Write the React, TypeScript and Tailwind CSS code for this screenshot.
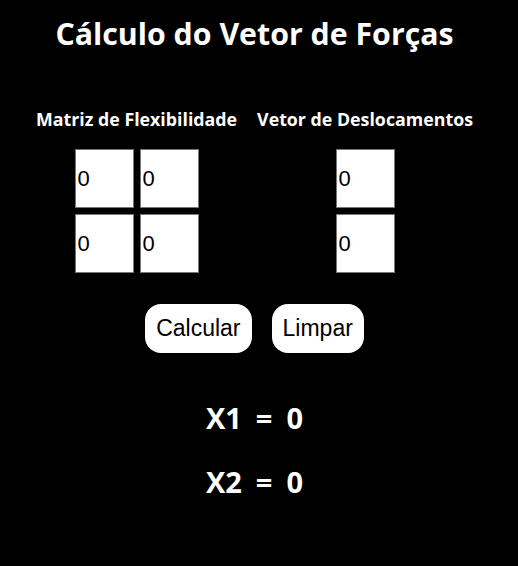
import { useState } from "react";

type Matriz = string[][];

export default function App() {
  const [matriz, setMatriz] = useState<Matriz>([
    ["0", "0"],
    ["0", "0"],
  ]);
  const [desloc, setDesloc] = useState<string[]>(["0", "0"]);
  const [forcas, setForcas] = useState<number[]>([0, 0]);

  // resolve F·X = D  ->  X = F^-1 · D
  const calcular = () => {
    const a = Number(matriz[0][0]) || 0;
    const b = Number(matriz[0][1]) || 0;
    const c = Number(matriz[1][0]) || 0;
    const d = Number(matriz[1][1]) || 0;
    const d1 = Number(desloc[0]) || 0;
    const d2 = Number(desloc[1]) || 0;
    const det = a * d - b * c;
    if (det === 0) {
      setForcas([0, 0]);
      return;
    }
    setForcas([(d * d1 - b * d2) / det, (-c * d1 + a * d2) / det]);
  };

  const limpar = () => {
    setMatriz([
      ["0", "0"],
      ["0", "0"],
    ]);
    setDesloc(["0", "0"]);
    setForcas([0, 0]);
  };

  const inputCls =
    "w-[59px] h-[59px] bg-white border border-[#767676] text-black text-[22px] pl-[2px] font-['Liberation_Sans',Arial,sans-serif] outline-none";

  return (
    <div className="min-h-[566px] bg-black">
      <div className="w-[509px] text-white flex flex-col items-center font-['Open_Sans',sans-serif]">
        <h1 className="mt-[12px] text-[30.3px] font-bold leading-[44px]">
          Cálculo do Vetor de Forças
        </h1>

        <div className="mt-[51px] flex gap-[20px]">
          <div className="flex flex-col items-center">
            <h3 className="text-[17.8px] font-bold leading-[24px]">Matriz de Flexibilidade</h3>
            <div className="mt-[18px] grid grid-cols-2 gap-[6px]">
              {matriz.map((linha, i) =>
                linha.map((v, j) => (
                  <input
                    key={`${i}-${j}`}
                    className={inputCls}
                    value={v}
                    onChange={(e) => {
                      const nova = matriz.map((l) => [...l]);
                      nova[i][j] = e.target.value;
                      setMatriz(nova);
                    }}
                  />
                ))
              )}
            </div>
          </div>
          <div className="flex flex-col items-center">
            <h3 className="text-[17.8px] font-bold leading-[24px]">Vetor de Deslocamentos</h3>
            <div className="mt-[18px] flex flex-col gap-[6px]">
              {desloc.map((v, i) => (
                <input
                  key={i}
                  className={inputCls}
                  value={v}
                  onChange={(e) => {
                    const novo = [...desloc];
                    novo[i] = e.target.value;
                    setDesloc(novo);
                  }}
                />
              ))}
            </div>
          </div>
        </div>

        <div className="mt-[31px] flex gap-[20px] font-['Liberation_Sans',Arial,sans-serif]">
          <button
            onClick={calcular}
            className="h-[49px] px-[11px] bg-white text-black text-[23px] rounded-[16px]"
          >
            Calcular
          </button>
          <button
            onClick={limpar}
            className="h-[49px] px-[11px] bg-white text-black text-[23px] rounded-[16px]"
          >
            Limpar
          </button>
        </div>

        <div className="mt-[45px] flex flex-col items-center gap-[24px]">
          <p className="text-[29px] font-bold leading-[40px] [word-spacing:6.5px]">X1 = {forcas[0]}</p>
          <p className="text-[29px] font-bold leading-[40px] [word-spacing:6.5px]">X2 = {forcas[1]}</p>
        </div>
      </div>
    </div>
  );
}
